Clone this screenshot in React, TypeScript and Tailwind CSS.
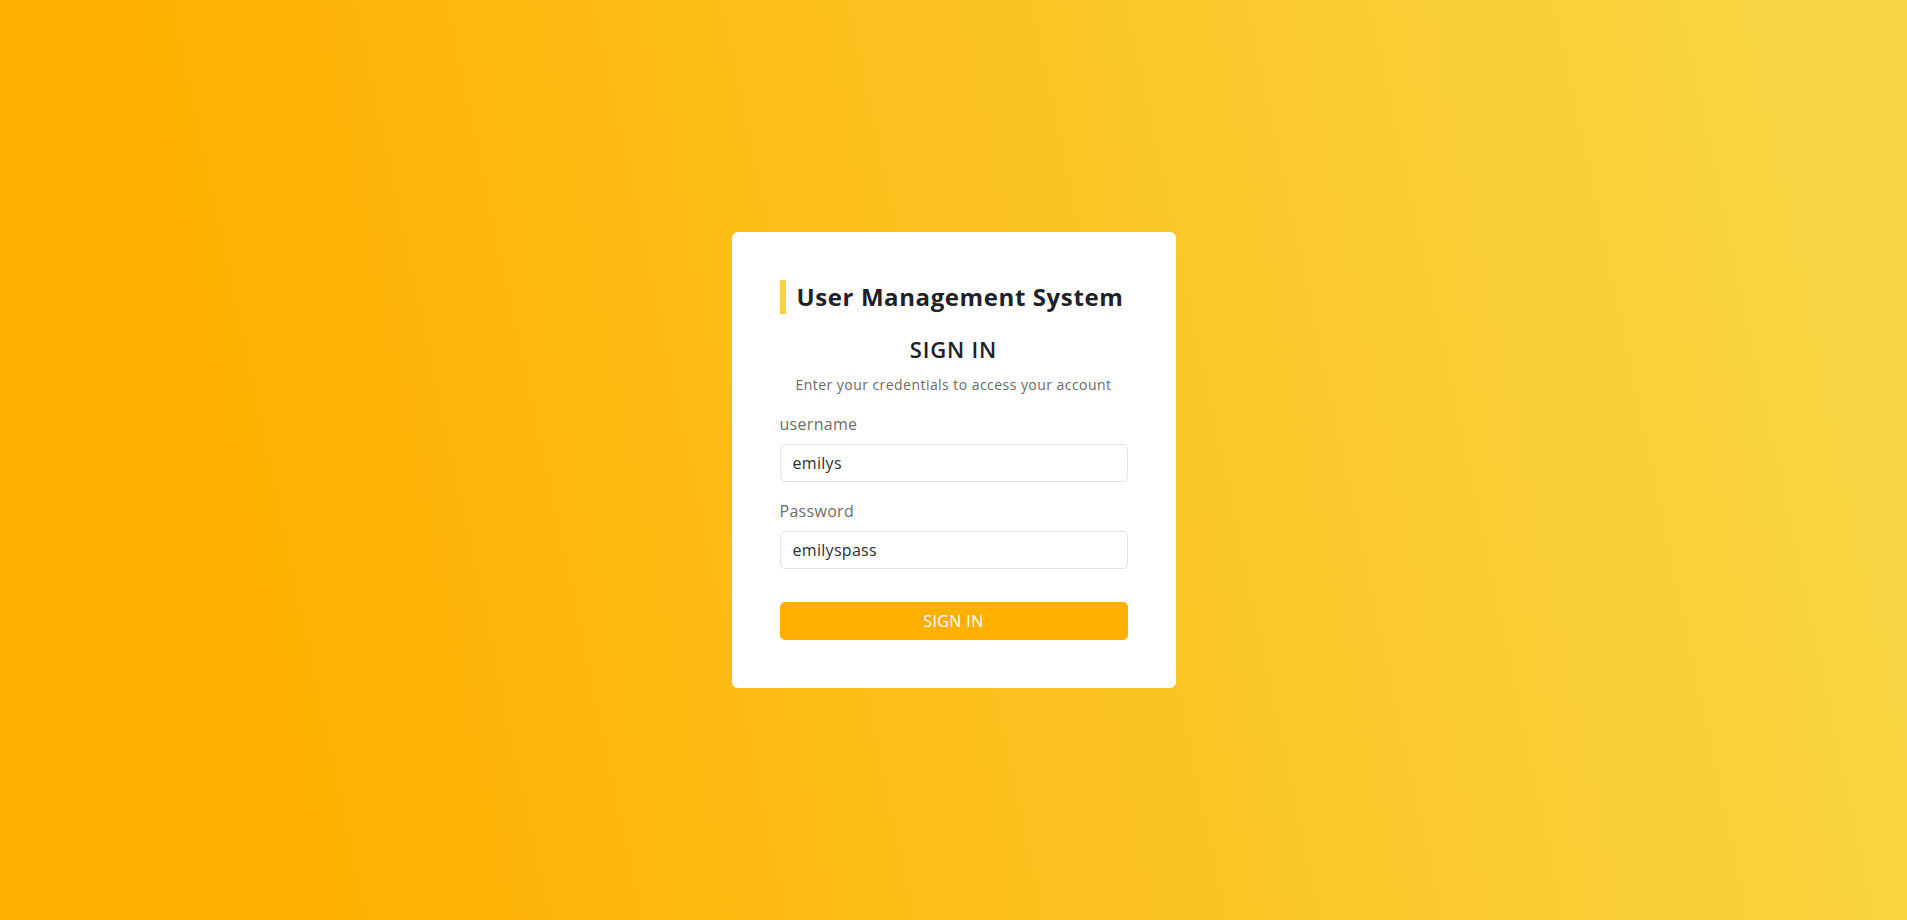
import { useState } from 'react';

export default function App() {
  const [username, setUsername] = useState('emilys');
  const [password, setPassword] = useState('emilyspass');

  return (
    <div
      className="flex min-h-screen w-full items-center justify-center bg-[linear-gradient(78deg,#ffb000_15%,#f8d542_93%)]"
      style={{ fontFamily: '"Open Sans", "Noto Sans", sans-serif' }}
    >
      <div className="w-[444px] rounded-md bg-white px-12 pt-12 pb-12">
        <h1 className="border-l-[6px] border-[#f9d23c] pl-[11px] text-[24px] leading-[34px] font-bold tracking-[0.6px] whitespace-nowrap text-[#1e2228]">
          User Management System
        </h1>

        <h2 className="mt-[21px] text-center text-[22px] leading-[28px] font-semibold tracking-[0.8px] text-[#1e2228]">
          SIGN IN
        </h2>
        <p className="mt-[12px] text-center text-[14px] leading-[20px] tracking-[0.45px] whitespace-nowrap text-[#6b6b6b]">
          Enter your credentials to access your account
        </p>

        <form className="mt-[17px] flex flex-col" onSubmit={(e) => e.preventDefault()}>
          <label className="text-[16px] leading-[24px] tracking-[0.3px] text-[#6e6e6e]">username</label>
          <input
            value={username}
            onChange={(e) => setUsername(e.target.value)}
            className="mt-[8px] h-[38px] w-full rounded-[5px] border border-[#e3e3e3] px-3 text-[16px] tracking-[0.3px] text-[#2b2f36] outline-none"
          />

          <label className="mt-[17px] text-[16px] leading-[24px] tracking-[0.3px] text-[#6e6e6e]">Password</label>
          <input
            type="text"
            value={password}
            onChange={(e) => setPassword(e.target.value)}
            className="mt-[8px] h-[38px] w-full rounded-[5px] border border-[#e3e3e3] px-3 text-[16px] tracking-[0.3px] text-[#2b2f36] outline-none"
          />

          <button
            type="submit"
            className="mt-[33px] h-[38px] w-full rounded-[5px] bg-[#ffb000] text-[16px] tracking-[0.4px] text-white"
          >
            SIGN IN
          </button>
        </form>
      </div>
    </div>
  );
}
